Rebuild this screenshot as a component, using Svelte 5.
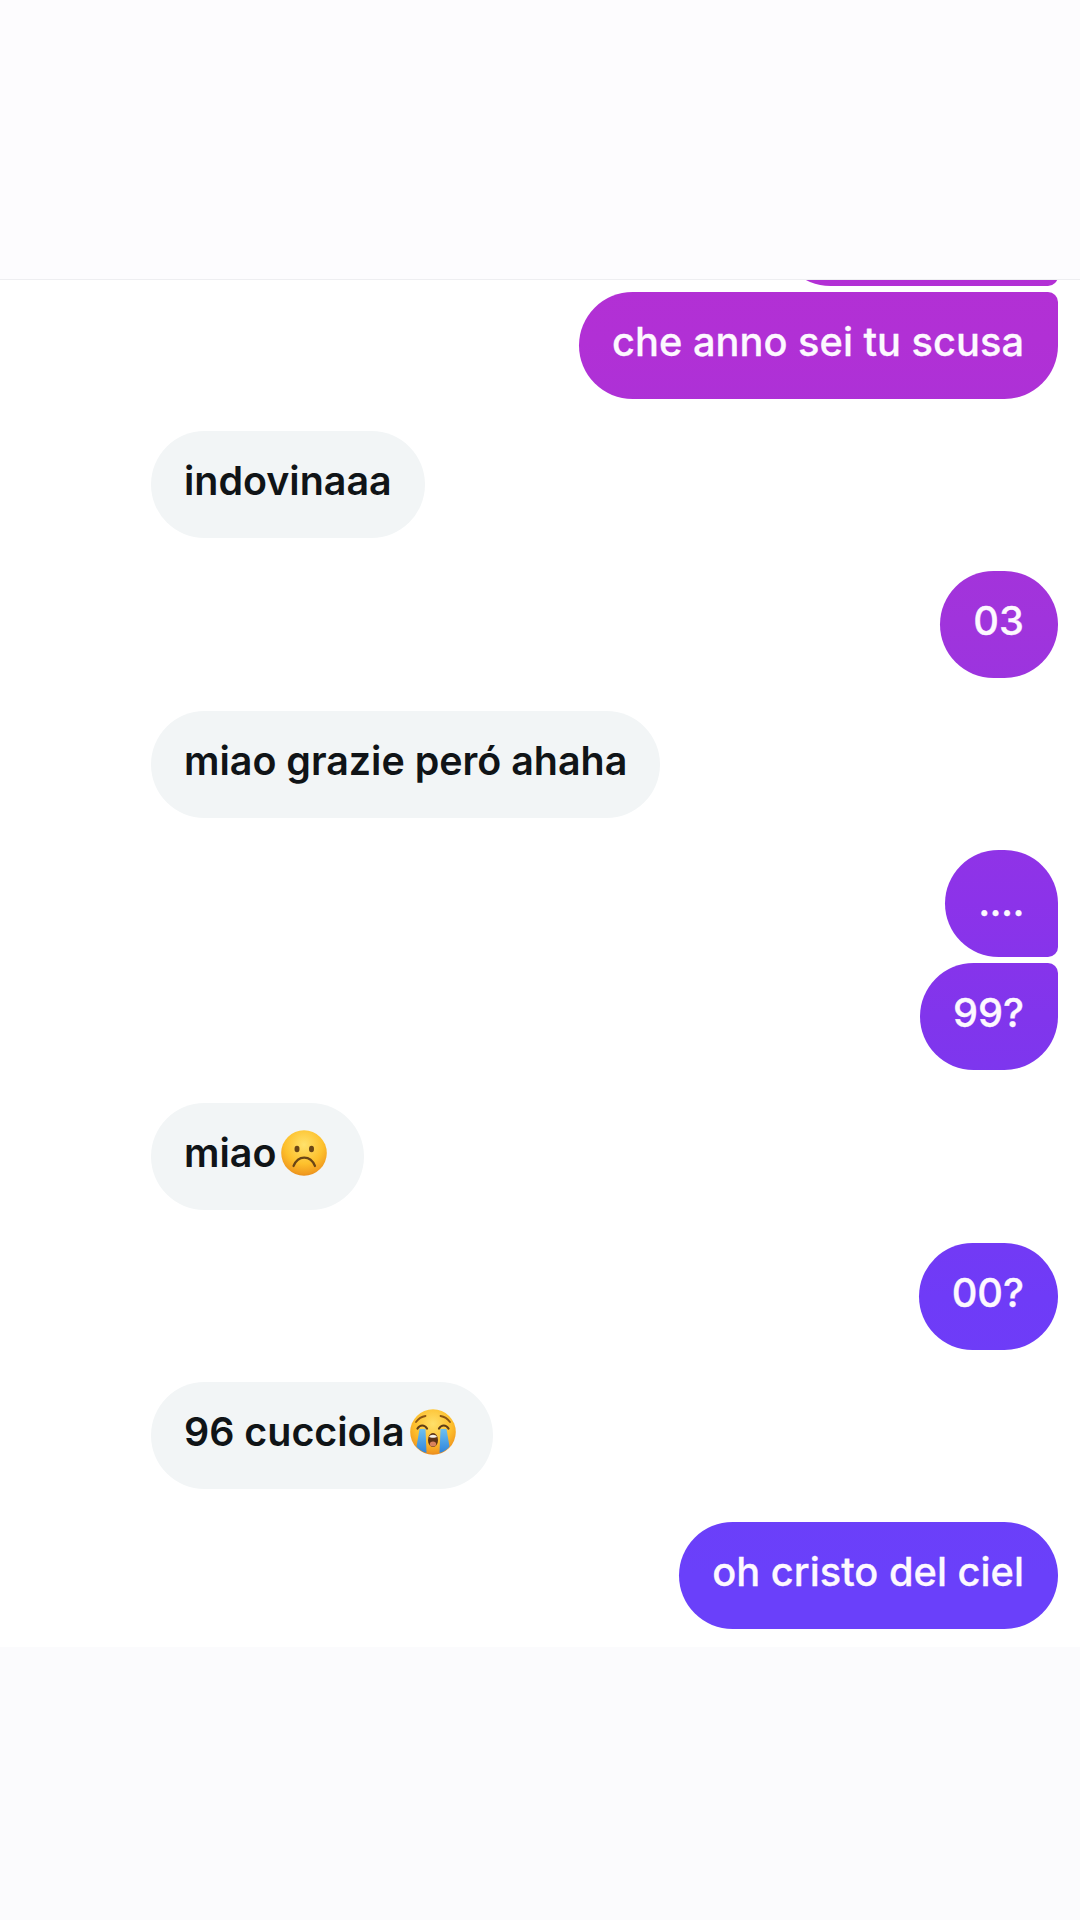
<script>
  const messages = [
    { id: 0, text: '', mine: true, group: 'start', clipped: true },
    { id: 1, text: 'che anno sei tu scusa', mine: true, group: 'end' },
    { id: 2, text: 'indovinaaa' },
    { id: 3, text: '03', mine: true },
    { id: 4, text: 'miao grazie peró ahaha' },
    { id: 5, text: '....', mine: true, group: 'start' },
    { id: 6, text: '99?', mine: true, group: 'end' },
    { id: 7, text: 'miao', emoji: 'sad' },
    { id: 8, text: '00?', mine: true },
    { id: 9, text: '96 cucciola', emoji: 'cry' },
    { id: 10, text: 'oh cristo del ciel', mine: true }
  ];
</script>

<div class="screen">
  <header class="top"></header>
  <main class="chat">
    {#each messages as m (m.id)}
      <div class="bubble {m.mine ? 'mine' : 'theirs'} {m.group ?? ''}" class:clipped={m.clipped}>
        {#if m.text}<span class="label">{m.text}</span>{/if}
        {#if m.emoji === 'sad'}
          <svg class="emoji" viewBox="0 0 46 46" aria-hidden="true">
            <defs>
              <radialGradient id="sadFace" cx="50%" cy="32%" r="70%">
                <stop offset="0" stop-color="#ffe26c" />
                <stop offset="0.6" stop-color="#fdc02c" />
                <stop offset="0.9" stop-color="#f19c20" />
                <stop offset="1" stop-color="#e58a1c" />
              </radialGradient>
            </defs>
            <circle cx="23" cy="23" r="22.8" fill="url(#sadFace)" />
            <ellipse cx="16" cy="19" rx="2.5" ry="3.2" fill="#6a4516" />
            <ellipse cx="30.5" cy="19" rx="2.5" ry="3.2" fill="#6a4516" />
            <path d="M12.5 36 C15 30 19 27.6 23.2 27.6 C27.4 27.6 31.6 30 34 36" fill="none" stroke="#6a4516" stroke-width="2.2" stroke-linecap="round" />
          </svg>
        {:else if m.emoji === 'cry'}
          <svg class="emoji" viewBox="0 0 46 46" aria-hidden="true">
            <defs>
              <radialGradient id="cryFace" cx="50%" cy="32%" r="70%">
                <stop offset="0" stop-color="#ffe06a" />
                <stop offset="0.6" stop-color="#fdbe2c" />
                <stop offset="0.9" stop-color="#f1981f" />
                <stop offset="1" stop-color="#e5821a" />
              </radialGradient>
              <linearGradient id="tear" x1="0" y1="0" x2="0" y2="1">
                <stop offset="0" stop-color="#6cc0f0" />
                <stop offset="1" stop-color="#2f84dc" />
              </linearGradient>
            </defs>
            <circle cx="23" cy="23" r="22.8" fill="url(#cryFace)" />
            <path d="M6 13 C8.5 9.5 12 7.5 15.5 7 M40 13 C37.5 9.5 34 7.5 30.5 7" fill="none" stroke="#8a5514" stroke-width="1.8" stroke-linecap="round" />
            <path d="M7.5 19.5 C10 15.5 14.5 15.5 17 19.5 M29 19.5 C31.5 15.5 36 15.5 38.5 19.5" fill="none" stroke="#5f3d16" stroke-width="2.2" stroke-linecap="round" />
            <path d="M9.5 20 H15.5 L16.5 44 C11.5 42.5 8 39.8 6.5 37.5 Z" fill="url(#tear)" />
            <path d="M30.5 20 H36.5 L39.5 37.5 C38 39.8 34.5 42.5 29.5 44 Z" fill="url(#tear)" />
            <ellipse cx="23" cy="31" rx="5" ry="7" fill="#5b3216" />
            <path d="M19 28 C20.2 25 25.8 25 27 28 C25.4 29 20.6 29 19 28 Z" fill="#f7f1e6" />
            <ellipse cx="23" cy="35" rx="3.2" ry="2.5" fill="#d9825c" />
          </svg>
        {/if}
      </div>
    {/each}
  </main>
  <footer class="bottom"></footer>
</div>

<style>
  :global(body) {
    margin: 0;
    background: #fff;
  }

  .screen {
    display: flex;
    flex-direction: column;
    width: 1080px;
    height: 1920px;
    overflow: hidden;
    font-family: Inter, "Liberation Sans", sans-serif;
  }

  .top {
    flex: 0 0 279px;
    background: #fdfcfe;
    border-bottom: 1px solid #eeeef1;
  }

  .chat {
    flex: 0 0 1367px;
    display: flex;
    flex-direction: column;
    justify-content: flex-end;
    gap: 32.7px;
    padding: 0 22px 18px 151px;
    box-sizing: border-box;
    overflow: hidden;
    background: #fff;
  }

  .bottom {
    flex: 1;
    background: #fbfbfd;
  }

  .bubble {
    flex: none;
    display: flex;
    align-items: center;
    gap: 5px;
    box-sizing: border-box;
    height: 107px;
    padding: 0 33px 7px;
    border-radius: 53.5px;
    line-height: 46px;
    white-space: nowrap;
  }

  .clipped {
    width: 281px;
  }

  .mine {
    align-self: flex-end;
    color: #fdf8ff;
    font-size: 39.8px;
    font-weight: 500;
    -webkit-text-stroke: 0.3px #fdf8ff;
    padding-right: 34px;
    background: linear-gradient(180deg, #b82fd2 0, #b130d5 340px, #a034dc 620px, #8c33e9 900px, #8135ec 1016px, #6f3bf7 1296px, #6a40fa 1575px) fixed;
  }

  .theirs {
    align-self: flex-start;
    color: #101417;
    font-size: 39.4px;
    font-weight: 600;
    background: #f2f5f6;
  }

  .start {
    border-bottom-right-radius: 10px;
    margin-bottom: -26.7px;
  }

  .start .label {
    padding-top: 4px;
    letter-spacing: -0.6px;
  }

  .end {
    border-top-right-radius: 10px;
  }

  .emoji {
    width: 46px;
    height: 46px;
    flex: none;
    margin-right: 4px;
  }
</style>
